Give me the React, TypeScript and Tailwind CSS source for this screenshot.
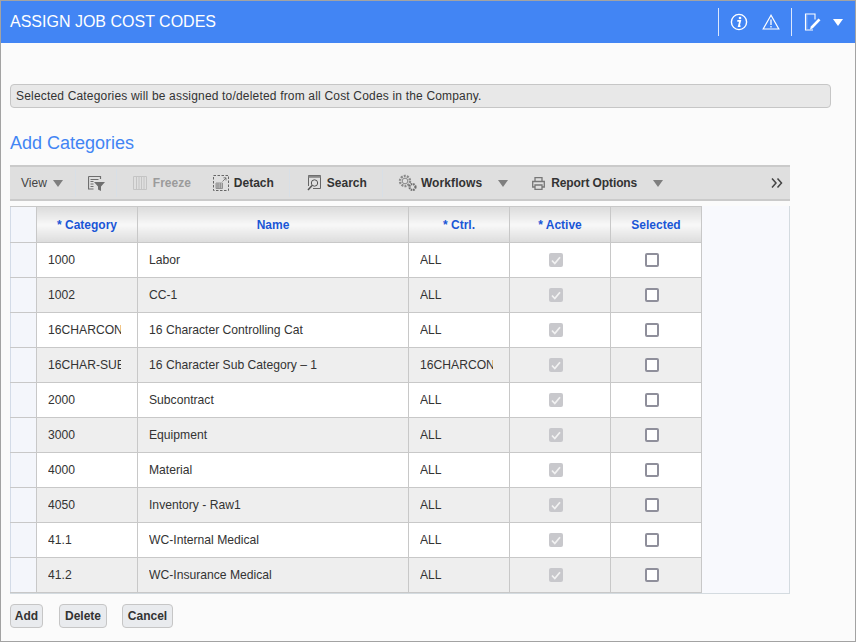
import React from "react";

const rows = [
  ["1000", "Labor", "ALL"],
  ["1002", "CC-1", "ALL"],
  ["16CHARCONTROL", "16 Character Controlling Cat", "ALL"],
  ["16CHAR-SUB-1", "16 Character Sub Category – 1", "16CHARCONTROL"],
  ["2000", "Subcontract", "ALL"],
  ["3000", "Equipment", "ALL"],
  ["4000", "Material", "ALL"],
  ["4050", "Inventory - Raw1", "ALL"],
  ["41.1", "WC-Internal Medical", "ALL"],
  ["41.2", "WC-Insurance Medical", "ALL"],
];

const headers = [
  ["* Category", "w-[101px]"],
  ["Name", "w-[271px]"],
  ["* Ctrl.", "w-[101px]"],
  ["* Active", "w-[101px]"],
  ["Selected", "w-[91px]"],
];

function Caret({ className = "" }: { className?: string }) {
  return (
    <svg width="10" height="7" viewBox="0 0 10 7" className={className}>
      <path d="M0 0h10L5 7z" fill="#7f7f7f" />
    </svg>
  );
}

function Sep({ className = "" }: { className?: string }) {
  return <div className={`w-px h-[28px] bg-[#d8dfe6] ${className}`} />;
}

function Label({ children, className = "" }: { children: React.ReactNode; className?: string }) {
  return <span className={`text-[12px] font-bold leading-none ${className}`}>{children}</span>;
}

export default function App() {
  return (
    <div className="w-[856px] h-[642px] overflow-hidden border border-[#a3a3a3] bg-[#fbfbfb] font-['Liberation_Sans',Arial,sans-serif]">
      <header className="h-[42px] bg-[#4285f4] flex items-center pl-[9px]">
        <h1 className="text-[16px] text-white leading-none">ASSIGN JOB COST CODES</h1>
        <div className="ml-auto flex items-center h-full">
          <div className="w-px h-[28px] bg-[#dbe7fd]" />
          <svg width="18" height="18" viewBox="0 0 18 18" className="ml-[11px]" fill="none">
            <circle cx="9" cy="9" r="7.600" stroke="#fff" strokeWidth="1.400" />
            <circle cx="10" cy="5" r="1.300" fill="#fff" />
            <path d="M7.300 7.800h2.900l-1.400 5.400h1.700" stroke="#fff" strokeWidth="1.700" />
          </svg>
          <svg width="18" height="16" viewBox="0 0 18 16" className="ml-[14px]" fill="none">
            <path d="M9 1.300 1.200 15h15.600z" stroke="#fff" strokeWidth="1.200" />
            <path d="M9 5.500v5.500M9 12v1.500" stroke="#fff" strokeWidth="1.300" />
          </svg>
          <div className="w-px h-[28px] bg-[#dbe7fd] ml-[11px]" />
          <svg width="17" height="18" viewBox="0 0 17 18" className="ml-[12px]" fill="none">
            <path d="M9 17H1.500V1h9.500v5.500" stroke="#fff" strokeWidth="1.100" />
            <path d="M2.800 2v14" stroke="#fff" strokeOpacity="0.4" />
            <path d="M6 16.500 6.800 13.500 14.500 5.500l2 1.800-7.700 8z" fill="#fff" />
          </svg>
          <svg width="10" height="7" viewBox="0 0 10 7" className="ml-[12px] mr-[12px]">
            <path d="M0 0h10L5 7z" fill="#fff" />
          </svg>
        </div>
      </header>

      <main className="pl-[9px]">
        <div className="mt-[41px] w-[821px] h-[24px] bg-[#e8e8e8] border border-[#c6c6c6] rounded-[4px] flex items-center pl-[5px] text-[12px] tracking-[0.18px] text-[#333]">
          Selected Categories will be assigned to/deleted from all Cost Codes in the Company.
        </div>

        <h2 className="mt-[24px] text-[18px] leading-[22px] text-[#4285f4]">Add Categories</h2>

        <div className="mt-[11px] w-[780px] h-[36px] bg-[#dfdfdf] border-y-2 border-[#cacaca] flex items-center text-[#333]">
          <span className="ml-[11px] text-[12px] text-[#444] leading-none">View</span>
          <Caret className="ml-[6px]" />
          <Sep className="ml-[12px]" />
          <svg width="17" height="15" viewBox="0 0 17 15" className="ml-[12px]" fill="none">
            <path d="M.5.500h12V3M.5.500v12.500h5" stroke="#6e6e6e" strokeWidth="1.200" />
            <path d="M2.500 3.500h8M2.500 5.500h3M2.500 8h3M2.500 10.500h3" stroke="#6e6e6e" />
            <path d="M6 6h11l-4 4.500V15l-3-1.500v-3z" fill="#6e6e6e" />
          </svg>
          <Sep className="ml-[11px]" />
          <svg width="14" height="14" viewBox="0 0 14 14" className="ml-[16px]" fill="none">
            <path d="M.5.5h13v13H.5zM3.500 1v12M6 1v12M8.500 1v12M11 1v12" stroke="#c4c4c4" />
          </svg>
          <Label className="ml-[6px] text-[#9b9b9b]">Freeze</Label>
          <svg width="16" height="16" viewBox="0 0 16 16" className="ml-[22px]" fill="none">
            <rect x=".5" y=".5" width="15" height="15" stroke="#666" strokeDasharray="2.500 1.500" />
            <path d="M3 8h6.500v5.500H3zM3 10h6.500M3 12h6.500M5 8v5.500M7.300 8v5.500" stroke="#777" strokeWidth=".7" />
            <path d="M9.500 6.500 13 3M10.500 2.800H13v2.700" stroke="#666" strokeWidth=".8" />
          </svg>
          <Label className="ml-[5px]">Detach</Label>
          <Sep className="ml-[15px]" />
          <svg width="14" height="16" viewBox="0 0 14 16" className="ml-[17px]" fill="none">
            <path d="M1.500 11V.5h12v13H6" stroke="#666" />
            <path d="M1.500.8h12v2h-12z" fill="#888" />
            <circle cx="7.500" cy="8" r="3.200" stroke="#555" />
            <path d="M5 10.500 1 15" stroke="#555" strokeWidth="1.500" />
          </svg>
          <Label className="ml-[6px]">Search</Label>
          <Sep className="ml-[15px]" />
          <svg width="19" height="18" viewBox="0 0 19 18" className="ml-[15px]" fill="none">
            <circle cx="7" cy="7" r="5" stroke="#8a8a8a" strokeWidth="2.400" strokeDasharray="2 1.100" />
            <circle cx="7" cy="7" r="2.800" stroke="#8a8a8a" />
            <circle cx="14.500" cy="13" r="3" stroke="#6e6e6e" strokeWidth="2.200" strokeDasharray="1.600 .8" />
          </svg>
          <Label className="ml-[4px] tracking-[0.1px]">Workflows</Label>
          <Caret className="ml-[16px]" />
          <svg width="13" height="13" viewBox="0 0 13 13" className="ml-[24px]" fill="none">
            <path d="M3 4V.7h7V4M3 10H.7V4.500h11.600V10H10" stroke="#777" strokeWidth="1.300" />
            <path d="M3 8h7v4.300H3z" stroke="#777" strokeWidth="1.300" />
          </svg>
          <Label className="ml-[6px] tracking-[-0.1px]">Report Options</Label>
          <Caret className="ml-[16px]" />
          <svg width="12" height="10" viewBox="0 0 12 10" className="ml-auto mr-[7px]" fill="none">
            <path d="M1 .5 5 5 1 9.500M6.500 .5 10.500 5l-4 4.500" stroke="#444" strokeWidth="1.500" />
          </svg>
        </div>

        <div className="mt-[5px] w-[780px] h-[388px] bg-[#f8f9fd] border-r border-b border-[#d4dbe0]">
          <table className="table-fixed border-collapse w-[691px] text-[12.15px] text-[#333]">
            <thead>
              <tr className="h-[36px]">
                <th className="w-[26px] border border-[#c8c8c8] border-l-[#d3dbe7] bg-[#f4f6fb]" />
                {headers.map(([h, w]) => (
                  <th
                    key={h}
                    className={`${w} text-[12px] border border-[#c8c8c8] bg-linear-to-b from-[#dcdcdc] via-[#f8f8f8] to-[#dcdcdc] text-[#1a56d6] font-bold`}
                  >
                    {h}
                  </th>
                ))}
              </tr>
            </thead>
            <tbody>
              {rows.map((r, i) => (
                <tr key={r[0]} className={`h-[35px] ${i % 2 ? "bg-[#eeeeee]" : "bg-white"}`}>
                  <td className="border border-[#c8c8c8] border-l-[#d3dbe7] bg-[#f4f6fb]" />
                  <td className="border border-[#c8c8c8] pl-[11px] pr-[16px]">
                    <div className="overflow-hidden whitespace-nowrap">{r[0]}</div>
                  </td>
                  <td className="border border-[#c8c8c8] pl-[11px] pr-[15px]">
                    <div className="overflow-hidden whitespace-nowrap">{r[1]}</div>
                  </td>
                  <td className="border border-[#c8c8c8] pl-[11px] pr-[16px]">
                    <div className="overflow-hidden whitespace-nowrap">{r[2]}</div>
                  </td>
                  <td className="border border-[#c8c8c8]">
                    <div className="mx-auto -translate-x-[4px] w-[14px] h-[14px] rounded-[2px] bg-[#c8c8cc] flex items-center justify-center">
                      <svg width="10" height="9" viewBox="0 0 10 9" fill="none">
                        <path d="M1 4.500 3.800 7.500 9 1.200" stroke="#f2f2f2" strokeWidth="1.800" />
                      </svg>
                    </div>
                  </td>
                  <td className="border border-[#c8c8c8]">
                    <div className="mx-auto -translate-x-[4px] w-[14px] h-[14px] rounded-[2px] bg-white border-2 border-[#8f8f9b]" />
                  </td>
                </tr>
              ))}
            </tbody>
          </table>
        </div>

        <div className="mt-[10px] flex">
          {[
            ["Add", "w-[33px]", ""],
            ["Delete", "w-[48px]", "ml-[16px]"],
            ["Cancel", "w-[51px]", "ml-[15px]"],
          ].map(([t, w, m]) => (
            <button
              key={t}
              className={`${w} ${m} h-[24px] rounded-[4px] border border-[#c6c6c6] bg-[#e9ebee] text-[12px] font-bold text-[#333] flex items-center justify-center`}
            >
              {t}
            </button>
          ))}
        </div>
      </main>
    </div>
  );
}
